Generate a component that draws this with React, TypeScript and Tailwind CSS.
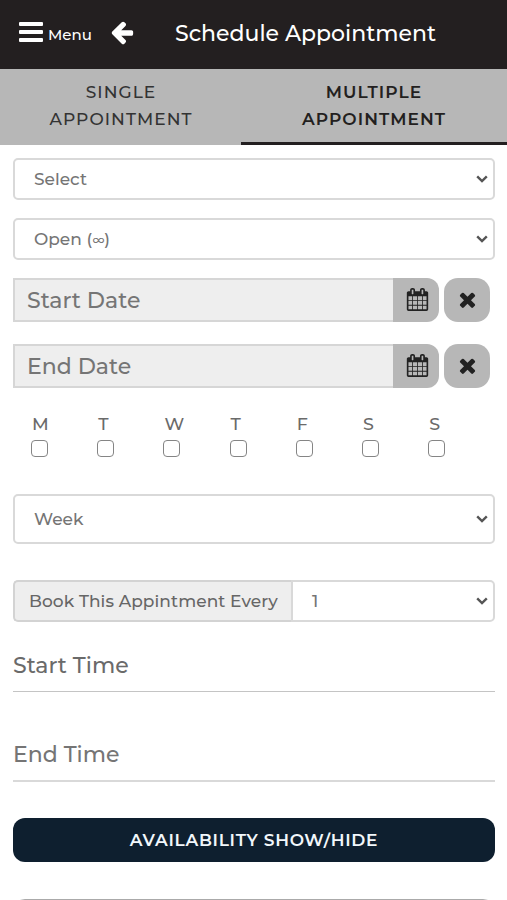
import React from "react";

function Glyph({ d, className }: { d: string; className: string }) {
  return (
    <svg viewBox="0 0 1792 1792" fill="currentColor" className={className} aria-hidden="true">
      <path d={d} />
    </svg>
  );
}

const ARROW_LEFT =
  "M1664 896v128q0 53-32.5 90.5t-84.5 37.5h-704l293 294q38 36 38 90t-38 90l-75 76q-37 37-90 37-52 0-91-37l-651-652q-37-37-37-90 0-52 37-91l651-650q38-38 91-38 52 0 90 38l75 74q38 38 38 91t-38 91l-293 293h704q52 0 84.5 37.5t32.5 90.5z";
const TIMES =
  "M1490 1322q0 40-28 68l-136 136q-28 28-68 28t-68-28l-294-294-294 294q-28 28-68 28t-68-28l-136-136q-28-28-28-68t28-68l294-294-294-294q-28-28-28-68t28-68l136-136q28-28 68-28t68 28l294 294 294-294q28-28 68-28t68 28l136 136q28 28 28 68t-28 68l-294 294 294 294q28 28 28 68z";
const CALENDAR =
  "M192 1664h288v-288h-288v288zm352 0h320v-288h-320v288zm-352-352h288v-320h-288v320zm352 0h320v-320h-320v320zm-352-384h288v-288h-288v288zm736 736h320v-288h-320v288zm-384-736h320v-288h-320v288zm768 736h288v-288h-288v288zm-384-352h320v-320h-320v320zm-352-864v-288q0-13-9.5-22.5t-22.5-9.5h-64q-13 0-22.5 9.5t-9.5 22.5v288q0 13 9.5 22.5t22.5 9.5h64q13 0 22.5-9.5t9.5-22.5zm736 864h288v-320h-288v320zm-384-384h320v-288h-320v288zm384 0h288v-288h-288v288zm32-480v-288q0-13-9.5-22.5t-22.5-9.5h-64q-13 0-22.5 9.5t-9.5 22.5v288q0 13 9.5 22.5t22.5 9.5h64q13 0 22.5-9.5t9.5-22.5zm384-64v1280q0 52-38 90t-90 38h-1408q-52 0-90-38t-38-90v-1280q0-52 38-90t90-38h128v-96q0-66 47-113t113-47h64q66 0 113 47t47 113v96h384v-96q0-66 47-113t113-47h64q66 0 113 47t47 113v96h128q52 0 90 38t38 90z";

function Chevron() {
  return (
    <svg viewBox="0 0 12 8" className="h-2 w-3 shrink-0" fill="none" stroke="#555" strokeWidth="2.4" aria-hidden="true">
      <path d="M1.2 1.4 6 6.1l4.8-4.7" />
    </svg>
  );
}

function SelectBox({ children, className }: { children: React.ReactNode; className: string }) {
  return (
    <div className={`flex items-center justify-between border-2 border-[#d9d9d9] bg-white pr-[5px] pl-[19px] text-[17px] text-[#757575] ${className}`}>
      <span className="mt-0.5 whitespace-nowrap">{children}</span>
      <Chevron />
    </div>
  );
}

function DateField({ label }: { label: string }) {
  return (
    <div className="flex h-11">
      <div className="flex flex-1 items-center border-2 border-r-0 border-[#d6d6d6] bg-[#eee] pl-3 text-[22px] text-[#757575]">
        {label}
      </div>
      <button className="flex w-[46px] items-center justify-center rounded-r-[12px] bg-[#b7b7b7] pl-0.5 text-[#222]">
        <Glyph d={CALENDAR} className="mb-0.5 size-[23px]" />
      </button>
      <button className="ml-[5px] flex w-[46px] items-center justify-center rounded-[14px] bg-[#b7b7b7] text-[#222]">
        <Glyph d={TIMES} className="mb-0.5 size-[23px]" />
      </button>
    </div>
  );
}

const DAYS = ["M", "T", "W", "T", "F", "S", "S"];

export default function App() {
  return (
    <div className="h-[900px] w-[507px] overflow-hidden bg-white font-['Montserrat','Inter',sans-serif] font-medium text-[#6a6a6a]">
      <header className="flex h-[69px] items-center bg-[#231f20] pl-[19px] text-white">
        <div className="mb-[6px] flex h-5 w-6 flex-col justify-between">
          <span className="h-1 rounded-[1px] bg-white" />
          <span className="h-1 rounded-[1px] bg-white" />
          <span className="h-1 rounded-[1px] bg-white" />
        </div>
        <span className="mt-px ml-[5px] w-[60px] text-[15px]">Menu</span>
        <Glyph d={ARROW_LEFT} className="mb-[5px] ml-px size-[26px]" />
        <h1 className="mb-0.5 ml-10 text-[22px] whitespace-nowrap">Schedule Appointment</h1>
      </header>

      <nav className="flex h-19 bg-[#b7b7b7] text-center text-[17px] leading-[27px]">
        <div className="w-[241px] pt-2.5 pl-px tracking-[1.05px] text-[#333]">
          SINGLE
          <br />
          APPOINTMENT
        </div>
        <div className="flex-1 border-b-[3px] border-[#231f20] pt-2.5 font-semibold tracking-[1.05px] text-[#231f20]">
          MULTIPLE
          <br />
          APPOINTMENT
        </div>
      </nav>

      <main className="flex flex-col pt-[13px] pr-3 pl-[13px]">
        <SelectBox className="h-[42px] rounded-[5px]">Select</SelectBox>
        <SelectBox className="mt-[18px] h-[42px] rounded-[5px]">
          Open (<span className="text-[13px]">∞</span>)
        </SelectBox>

        <div className="mt-[18px] flex flex-col gap-[22px] pr-[5px]">
          <DateField label="Start Date" />
          <DateField label="End Date" />
        </div>

        <div className="mt-[24px] flex pl-[18px]">
          {DAYS.map((day, i) => (
            <label key={i} className="flex w-[66.2px] flex-col text-[17.5px] leading-6 text-[#6a6a6a]">
              <span className="pl-px">{day}</span>
              <span className="mt-[4px] size-[17px] rounded-[4px] border-[1.5px] border-[#858585] bg-white" />
            </label>
          ))}
        </div>

        <SelectBox className="mt-[37px] h-[50px] rounded-[5px]">Week</SelectBox>

        <div className="mt-9 flex">
          <div className="flex h-[42px] w-[278px] items-center rounded-l-[5px] border-2 border-r-0 border-[#d3d3d3] bg-[#eee] pl-[14px] text-[17px] whitespace-nowrap text-[#666]">
            <span className="mt-0.5 tracking-[0.08px]">Book This Appintment Every</span>
          </div>
          <SelectBox className="h-[42px] flex-1 rounded-r-[5px] pl-5">1</SelectBox>
        </div>

        <div className="mt-[26px] h-11 border-b border-[#c4c4c4] text-[22px] leading-9">
          Start Time
        </div>
        <div className="mt-[45px] h-[45px] border-b-2 border-[#d9d9d9] text-[22px] leading-9 text-[#757575]">
          End Time
        </div>

        <button className="mt-9 h-11 rounded-[12px] bg-[#0e1f2f] pt-0.5 text-[17px] font-semibold tracking-[0.7px] text-[#f2f7fb]">
          AVAILABILITY SHOW/HIDE
        </button>
        <div className="mt-[37px] h-11 rounded-[12px] border border-[#aaa]" />
      </main>
    </div>
  );
}
